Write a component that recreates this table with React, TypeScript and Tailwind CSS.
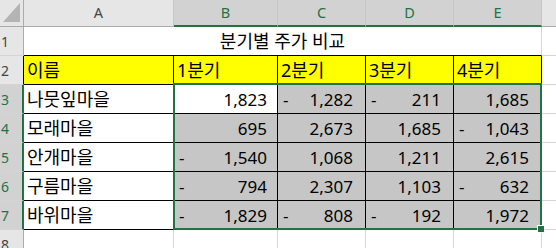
import React from "react";

type Row = [string, number, number, number, number];

const rows: Row[] = [
  ["나뭇잎마을", 1823, -1282, -211, 1685],
  ["모래마을", 695, 2673, 1685, -1043],
  ["안개마을", -1540, 1068, 1211, 2615],
  ["구름마을", -794, 2307, 1103, -632],
  ["바위마을", -1829, -808, -192, 1972],
];

const quarters = ["1분기", "2분기", "3분기", "4분기"];
const letters = ["A", "B", "C", "D", "E"];
// right padding per numeric column (B..E)
const numPad = ["pr-[10px]", "pr-[12px]", "pr-[12px]", "pr-[12px]"];

function fmt(n: number) {
  return Math.abs(n).toLocaleString("en-US");
}

function RowHead({ n, selected, black }: { n: number; selected?: boolean; black?: boolean }) {
  return (
    <div
      className={
        "flex items-center pl-[1px] text-[14px] border-b border-[#d4d4d4] " +
        (selected
          ? "bg-[#d2d2d2] text-[#217346] border-r-2 border-r-[#217346]"
          : black
            ? "bg-[#e6e6e6] text-[#444] border-r border-r-black"
            : "bg-[#e6e6e6] text-[#444] border-r border-r-[#ababab]")
      }
    >
      {n}
    </div>
  );
}

export default function App() {
  return (
    <div
      className="relative w-[556px] h-[248px] overflow-hidden bg-white text-black"
      style={{ fontFamily: '"Noto Sans", "Noto Sans CJK KR", sans-serif' }}
    >
      <div className="grid grid-cols-[24px_150px_104px_88px_88px_88px_14px] grid-rows-[27px_repeat(8,29px)]">
        {/* column headers */}
        <div className="relative bg-[#e6e6e6] border-r border-b border-[#ababab]">
          <div className="absolute left-[3px] top-[3px] w-[17px] h-[19px] bg-[#b4b4b4] [clip-path:polygon(100%_0,100%_100%,0_100%)]" />
        </div>
        {letters.map((l, i) => (
          <div
            key={l}
            className={
              "flex items-center justify-center text-[14.5px] border-r border-[#c6c6c6] " +
              (i === 0
                ? "bg-[#e6e6e6] text-[#444] border-b border-b-[#ababab]"
                : "bg-[#d2d2d2] text-[#217346] border-b-2 border-b-[#217346]")
            }
          >
            {l}
          </div>
        ))}
        <div className="bg-[#e6e6e6] border-b border-[#ababab]" />

        {/* row 1: merged title */}
        <RowHead n={1} />
        <div className="col-span-5 flex items-center justify-center text-[18px] pt-[1px] border-r border-r-[#d4d4d4] border-b border-b-black">
          분기별 주가 비교
        </div>
        <div className="border-b border-[#d4d4d4]" />

        {/* row 2: yellow headers */}
        <RowHead n={2} black />
        <div className="flex items-center pl-[3px] text-[18px] bg-[#ffff00] border-r border-b border-black">
          이름
        </div>
        {quarters.map((q) => (
          <div
            key={q}
            className="flex items-center pl-[3px] text-[18px] bg-[#ffff00] border-r border-b border-black"
          >
            {q}
          </div>
        ))}
        <div className="border-b border-[#d4d4d4]" />

        {/* rows 3..7 */}
        {rows.map((r, ri) => (
          <React.Fragment key={r[0]}>
            <RowHead n={ri + 3} selected />
            <div className="flex items-center pl-[3px] text-[18px] bg-white border-r border-b border-black">
              {r[0]}
            </div>
            {[r[1], r[2], r[3], r[4]].map((v, ci) => (
              <div
                key={ci}
                className={
                  "flex items-center justify-between pl-[5px] text-[17px] pt-[2px] border-r border-b border-black " +
                  numPad[ci] +
                  (ri === 0 && ci === 0 ? " bg-white" : " bg-[#c6c6c6]")
                }
              >
                <span>{v < 0 ? "-" : ""}</span>
                <span>{fmt(v)}</span>
              </div>
            ))}
            <div className="border-b border-[#d4d4d4]" />
          </React.Fragment>
        ))}

        {/* row 8 */}
        <RowHead n={8} />
        {letters.map((l) => (
          <div key={l} className="border-r border-b border-[#d4d4d4]" />
        ))}
        <div className="border-b border-[#d4d4d4]" />
      </div>

      {/* selection B3:E7 */}
      <div className="absolute left-[173px] top-[83px] w-[369px] h-[147px] border-2 border-[#217346] pointer-events-none" />
      <div className="absolute left-[537px] top-[225px] w-[8px] h-[8px] bg-[#217346] border border-white pointer-events-none" />
    </div>
  );
}
